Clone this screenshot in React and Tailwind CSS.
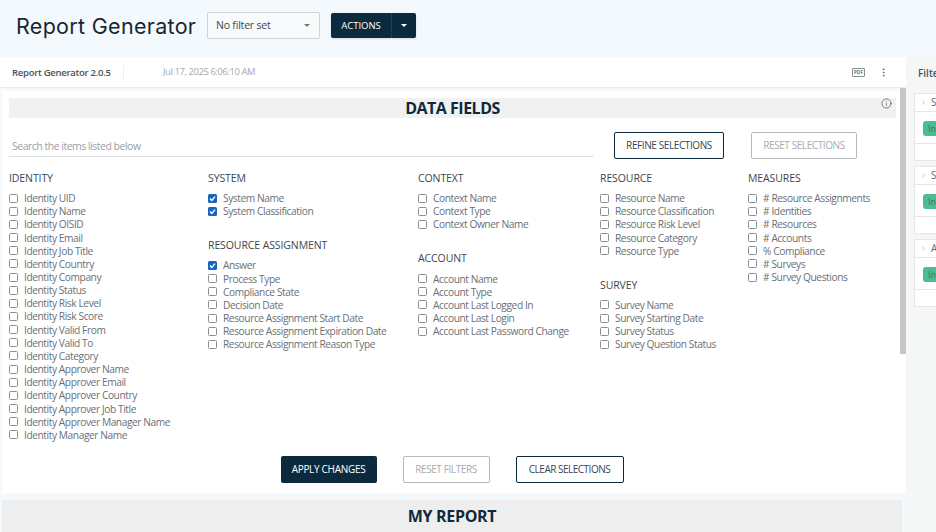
import React from "react";
import { ChevronRight, EllipsisVertical, Info } from "lucide-react";

const FONT = "font-['Open_Sans',sans-serif]";

const COL_1 = [
  {
    title: "IDENTITY",
    items: [
      "Identity UID",
      "Identity Name",
      "Identity OISID",
      "Identity Email",
      "Identity Job Title",
      "Identity Country",
      "Identity Company",
      "Identity Status",
      "Identity Risk Level",
      "Identity Risk Score",
      "Identity Valid From",
      "Identity Valid To",
      "Identity Category",
      "Identity Approver Name",
      "Identity Approver Email",
      "Identity Approver Country",
      "Identity Approver Job Title",
      "Identity Approver Manager Name",
      "Identity Manager Name",
    ],
  },
];

const COL_2 = [
  { title: "SYSTEM", items: ["System Name", "System Classification"], checked: ["System Name", "System Classification"] },
  {
    title: "RESOURCE ASSIGNMENT",
    items: [
      "Answer",
      "Process Type",
      "Compliance State",
      "Decision Date",
      "Resource Assignment Start Date",
      "Resource Assignment Expiration Date",
      "Resource Assignment Reason Type",
    ],
    checked: ["Answer"],
  },
];

const COL_3 = [
  { title: "CONTEXT", items: ["Context Name", "Context Type", "Context Owner Name"] },
  {
    title: "ACCOUNT",
    items: ["Account Name", "Account Type", "Account Last Logged In", "Account Last Login", "Account Last Password Change"],
  },
];

const COL_4 = [
  {
    title: "RESOURCE",
    items: ["Resource Name", "Resource Classification", "Resource Risk Level", "Resource Category", "Resource Type"],
  },
  { title: "SURVEY", items: ["Survey Name", "Survey Starting Date", "Survey Status", "Survey Question Status"] },
];

const COL_5 = [
  {
    title: "MEASURES",
    items: ["# Resource Assignments", "# Identities", "# Resources", "# Accounts", "% Compliance", "# Surveys", "# Survey Questions"],
  },
];

function Check({ on }) {
  if (on) {
    return (
      <span className="w-[9px] h-[9px] -mt-[1px] rounded-[1.5px] bg-[#1666c0] flex items-center justify-center shrink-0">
        <svg viewBox="0 0 9 9" className="w-[9px] h-[9px]">
          <path d="M2 4.6 3.8 6.5 7 2.6" fill="none" stroke="#fff" strokeWidth="1.4" />
        </svg>
      </span>
    );
  }
  return <span className="w-[9px] h-[9px] -mt-[1px] rounded-[1.5px] border border-[#8a8f94] bg-white shrink-0" />;
}

function Section({ title, items, checked = [] }) {
  return (
    <div className="mb-[21px]">
      <div className="text-[10.5px] leading-[13px] tracking-[-0.1px] text-[#3c4650] mb-[7px]">{title}</div>
      {items.map((it) => (
        <div key={it} className="h-[13.17px] flex items-center gap-[6px] whitespace-nowrap">
          <Check on={checked.includes(it)} />
          <span className="text-[10.2px] leading-[13px] tracking-[-0.42px] text-[#6a7077]">{it}</span>
        </div>
      ))}
    </div>
  );
}

function Column({ sections }) {
  return (
    <div>
      {sections.map((s) => (
        <Section key={s.title} {...s} />
      ))}
    </div>
  );
}

function FilterCard({ letter }) {
  return (
    <div className="border border-[#e4e6e8] bg-white mb-[5px]">
      <div className="h-[18px] flex items-center pl-[5px] gap-[4px] border-b border-[#e4e6e8] text-[10px] text-[#666]">
        <ChevronRight size={7} strokeWidth={1.5} className="text-[#888]" />
        {letter}
      </div>
      <div className="h-[32px] flex items-center pl-[8px] pt-[2px] border-b border-[#e4e6e8]">
        <span className="w-[20px] h-[15px] rounded-[3px] bg-[#4fbb96] text-[9px] leading-[15px] text-[#4a6a60] pl-[5px] overflow-hidden">In</span>
      </div>
      <div className="h-[16px]" />
    </div>
  );
}

export default function App() {
  return (
    <div className={`${FONT} w-[936px] h-[532px] overflow-hidden bg-[#f3f9fc] flex flex-col`}>
      <header className="h-[57px] shrink-0 flex items-center pl-[16px] pb-[6px]">
        <h1 className="font-['Inter',sans-serif] text-[21.5px] leading-[28px] text-[#1a2630] w-[190px] whitespace-nowrap tracking-[0.3px]">
          Report Generator
        </h1>
        <div className="ml-[1px] w-[113px] h-[27px] rounded-[2px] border border-[#cfd4d8] bg-[#f8fbfc] flex items-center justify-between pl-[8px] pr-[9px]">
          <span className="text-[10.5px] tracking-[-0.2px] text-[#3c4650]">No filter set</span>
          <span className="w-0 h-0 border-x-[3px] border-x-transparent border-t-[3px] border-t-[#777]" />
        </div>
        <div className="ml-[11px] w-[85px] h-[25px] rounded-[2px] bg-[#0c2a3d] flex items-center text-white shadow-sm">
          <span className="w-[61px] text-center text-[9.5px] border-r border-dotted border-r-[#3b5464] leading-[25px]">ACTIONS</span>
          <span className="flex-1 flex justify-center">
            <span className="w-0 h-0 border-x-[3.5px] border-x-transparent border-t-[3.5px] border-t-white" />
          </span>
        </div>
      </header>

      <div className="flex-1 flex min-h-0">
        <main className="w-[906px] shrink-0 flex flex-col min-h-0">
          <div className="h-[31px] shrink-0 bg-white flex items-center pl-[12px] pr-[17px] pt-[1px] border-b border-[#e6eef2]">
            <span className="text-[9.5px] tracking-[-0.27px] font-semibold text-[#4a525a] w-[112px] border-r border-[#eceff1] leading-[16px]">Report Generator 2.0.5</span>
            <span className="ml-[39px] text-[9.5px] tracking-[-0.45px] text-[#a5a9ad]">Jul 17, 2025 6:06:10 AM</span>
            <span className="ml-auto w-[13px] h-[9px] rounded-[1px] border border-[#8a8f94] text-[5px] leading-[7px] text-center text-[#777] font-bold">PDF</span>
            <EllipsisVertical size={11} strokeWidth={2} className="ml-[13px] text-[#666]" />
          </div>

          <div className="h-[402px] shrink-0 flex pl-[2px] mt-[3px]">
            <div className="flex-1 bg-white pl-[7px] pr-[4px] pt-[7px] relative">
              <div className="h-[20px] bg-[#f0f1f1] text-center text-[16px] leading-[20px] tracking-[-0.5px] font-bold text-[#10293a]">DATA FIELDS</div>
              <Info size={11} strokeWidth={1.4} className="absolute right-[8px] top-[7px] text-[#444]" />

              <div className="flex items-start mt-[14px]">
                <div className="w-[585px] h-[25px] border-b border-[#dfe2e4] text-[10.5px] tracking-[-0.5px] leading-[22px] pt-[3px] pl-[3px] text-[#9ba0a5]">
                  Search the items listed below
                </div>
                <button className="ml-[20px] w-[110px] h-[27px] rounded-[2px] border border-[#0c2a3d] text-[10px] tracking-[-0.4px] text-[#3c4650]">REFINE SELECTIONS</button>
                <button className="ml-[27px] w-[106px] h-[27px] rounded-[2px] border border-[#b5b8bc] text-[10px] tracking-[-0.4px] text-[#a7abaf]">RESET SELECTIONS</button>
              </div>

              <div className="grid grid-cols-[199px_210px_182px_148px_1fr] mt-[13px]">
                <Column sections={COL_1} />
                <Column sections={COL_2} />
                <Column sections={COL_3} />
                <Column sections={COL_4} />
                <Column sections={COL_5} />
              </div>

              <div className="absolute left-0 right-0 top-[365px] flex justify-center gap-[26px] pl-[2px]">
                <button className="w-[96px] h-[27px] rounded-[2px] bg-[#0c2a3d] text-[10px] tracking-[-0.3px] text-white">APPLY CHANGES</button>
                <button className="w-[87px] h-[27px] rounded-[2px] border border-[#b5b8bc] text-[10px] tracking-[-0.4px] text-[#a7abaf]">RESET FILTERS</button>
                <button className="w-[108px] h-[27px] rounded-[2px] border border-[#0c2a3d] text-[10px] tracking-[-0.5px] text-[#3c4650]">CLEAR SELECTIONS</button>
              </div>
            </div>
            <div className="w-[6px] shrink-0 bg-white -mt-[3px]">
              <div className="h-[266px] bg-[#c6c6c6]" />
            </div>
          </div>

          <div className="ml-[2px] mr-[4px] mt-[7px] flex-1 bg-[#eeeeee] text-center text-[16px] tracking-[-0.3px] leading-[32px] font-bold text-[#10293a]">MY REPORT</div>
        </main>

        <aside className="flex-1 min-w-0 overflow-hidden bg-[#f5f6f6] flex flex-col">
          <div className="h-[31px] shrink-0 pl-[12px] pt-[1px] flex items-center text-[10px] font-semibold text-[#4a525a] whitespace-nowrap">Filters</div>
          <div className="w-[40px] pl-[8px] pt-[5px]">
            <FilterCard letter="S" />
            <FilterCard letter="S" />
            <FilterCard letter="A" />
          </div>
        </aside>
      </div>
    </div>
  );
}
